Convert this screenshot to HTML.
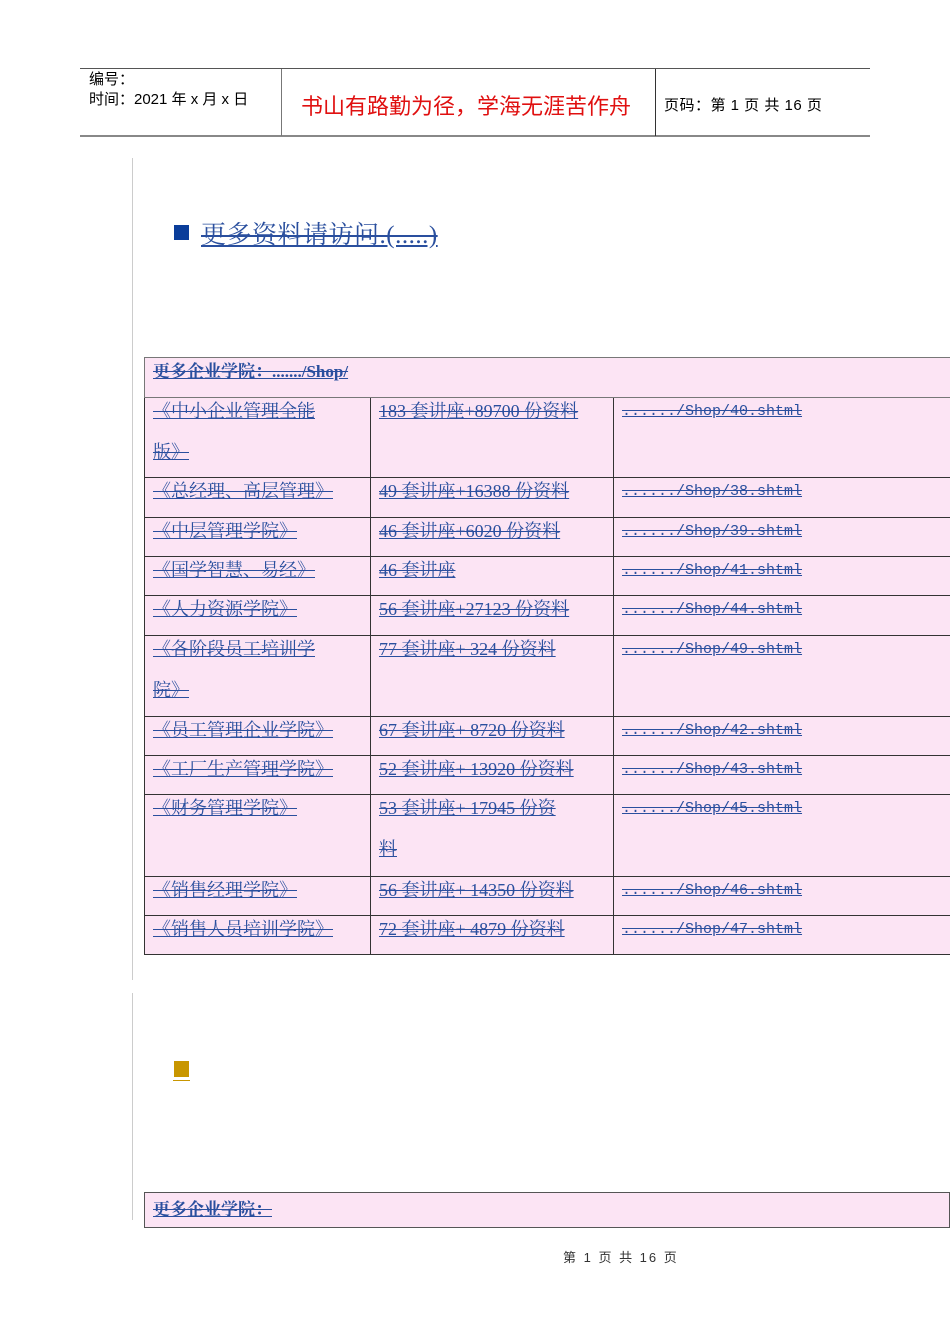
<!DOCTYPE html>
<html><head><meta charset="utf-8"><style>
body{margin:0;width:950px;height:1344px;background:#fff;position:relative;overflow:hidden;font-family:"Liberation Serif","Noto Serif CJK SC",serif}
.a{position:absolute}
.hd{font-family:"Liberation Sans","Noto Sans CJK SC",sans-serif}
.l{color:#2a4f9e;text-decoration:underline line-through;text-decoration-color:#2a4f9e}
table{position:absolute;left:144px;border-collapse:collapse;background:#fce4f4;table-layout:fixed}
td{border:1px solid #333;vertical-align:top;padding:0 0 0 8px;font-size:18px;line-height:41px;overflow:visible}
td div{position:relative;top:-7px;height:1px;overflow:visible;white-space:nowrap}
.m{font-family:"Liberation Mono",monospace;font-size:15px}
</style></head><body>
<div class="a" style="left:80px;top:68px;width:790px;height:1px;background:#555"></div>
<div class="a" style="left:80px;top:135px;width:790px;height:2px;background:#888"></div>
<div class="a" style="left:281px;top:69px;width:1px;height:67px;background:#777"></div>
<div class="a" style="left:655px;top:69px;width:1px;height:67px;background:#333"></div>
<div class="a hd" style="left:89px;top:70px;font-size:15px;line-height:20px">编号：<br>时间：2021 年 x 月 x 日</div>
<div class="a hd" style="left:301px;top:89px;font-size:22px;color:#e01010">书山有路勤为径，学海无涯苦作舟</div>
<div class="a hd" style="left:664px;top:94px;font-size:15px;letter-spacing:0.5px">页码：第 1 页 共 16 页</div>

<div class="a" style="left:132px;top:158px;width:1px;height:822px;background:#ccc"></div>
<div class="a" style="left:132px;top:993px;width:1px;height:227px;background:#ccc"></div>

<div class="a" style="left:174px;top:225px;width:15px;height:15px;background:#0a3d9a"></div>
<div class="a l" style="left:201px;top:215px;font-size:25px;letter-spacing:0.5px">更多资料请访问.(.....)</div>

<table style="top:357px;width:806px;border:1px solid #777">
<colgroup><col style="width:226px"><col style="width:243px"><col style="width:337px"></colgroup>
<tr style="height:40px"><td colspan="3" style="border-color:#777"><div class="l" style="font-weight:bold;font-size:17px">更多企业学院：......./Shop/</div></td></tr>
<tr style="height:80px"><td><div class="l">《中小企业管理全能<br>版》</div></td><td><div class="l">183 套讲座+89700 份资料</div></td><td><div class="l m">....../Shop/40.shtml</div></td></tr>
<tr style="height:40px"><td><div class="l">《总经理、高层管理》</div></td><td><div class="l">49 套讲座+16388 份资料</div></td><td><div class="l m">....../Shop/38.shtml</div></td></tr>
<tr style="height:39px"><td><div class="l">《中层管理学院》</div></td><td><div class="l">46 套讲座+6020 份资料 </div></td><td><div class="l m">....../Shop/39.shtml</div></td></tr>
<tr style="height:39px"><td><div class="l">《国学智慧、易经》</div></td><td><div class="l">46 套讲座</div></td><td><div class="l m">....../Shop/41.shtml</div></td></tr>
<tr style="height:40px"><td><div class="l">《人力资源学院》</div></td><td><div class="l">56 套讲座+27123 份资料</div></td><td><div class="l m">....../Shop/44.shtml</div></td></tr>
<tr style="height:81px"><td><div class="l">《各阶段员工培训学<br>院》</div></td><td><div class="l">77 套讲座+ 324 份资料</div></td><td><div class="l m">....../Shop/49.shtml</div></td></tr>
<tr style="height:39px"><td><div class="l">《员工管理企业学院》</div></td><td><div class="l">67 套讲座+ 8720 份资料</div></td><td><div class="l m">....../Shop/42.shtml</div></td></tr>
<tr style="height:39px"><td><div class="l">《工厂生产管理学院》</div></td><td><div class="l">52 套讲座+ 13920 份资料</div></td><td><div class="l m">....../Shop/43.shtml</div></td></tr>
<tr style="height:82px"><td><div class="l">《财务管理学院》</div></td><td><div class="l">53 套讲座+ 17945 份资<br>料 </div></td><td><div class="l m">....../Shop/45.shtml</div></td></tr>
<tr style="height:39px"><td><div class="l">《销售经理学院》</div></td><td><div class="l">56 套讲座+ 14350 份资料</div></td><td><div class="l m">....../Shop/46.shtml</div></td></tr>
<tr style="height:39px"><td><div class="l">《销售人员培训学院》</div></td><td><div class="l">72 套讲座+ 4879 份资料</div></td><td><div class="l m">....../Shop/47.shtml</div></td></tr>
</table>

<div class="a" style="left:174px;top:1061px;width:15px;height:16px;background:#c89600"></div>
<div class="a" style="left:173px;top:1080px;width:17px;height:1px;background:#c89600"></div>

<table style="top:1192px;width:806px;border:1px solid #555">
<tr style="height:35px"><td style="border-color:#555"><div class="l" style="font-weight:bold;font-size:17px;top:-4px">更多企业学院： </div></td></tr>
</table>

<div class="a" style="left:563px;top:1247px;font-size:13px;color:#333;letter-spacing:2px;font-family:'Liberation Sans','Noto Sans CJK SC',sans-serif">第 1 页 共 16 页</div>
</body></html>
